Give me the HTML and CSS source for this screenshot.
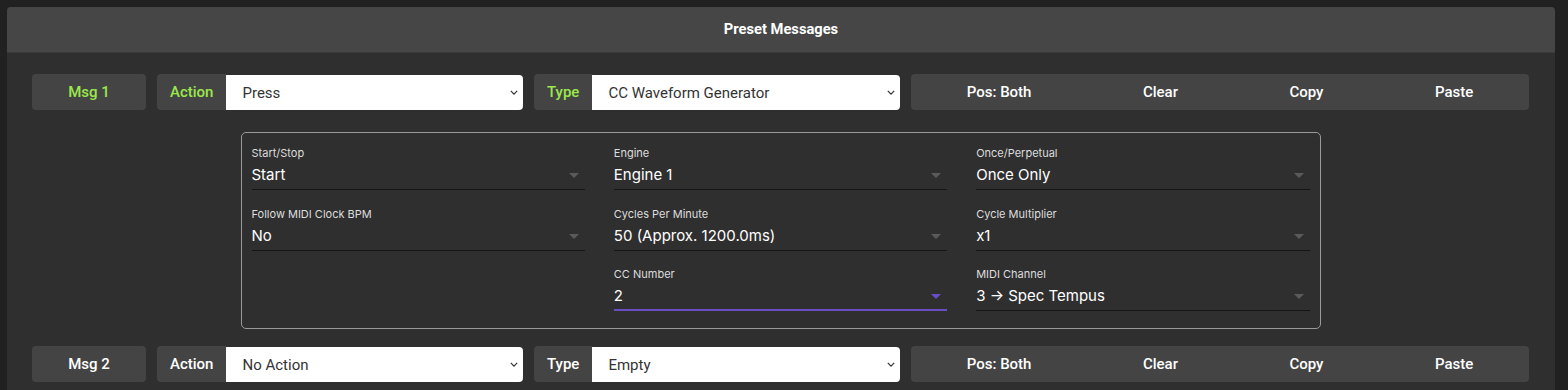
FILE: index.html
```html
<!DOCTYPE html>
<html lang="en">
<head>
    <meta charset="UTF-8">
    <meta name="viewport" content="width=device-width, initial-scale=1.0">
    <title>Preset Messages</title>
    <link rel="stylesheet" href="styles.css">
</head>
<body>

<div class="panel">
    <div class="panel-header">Preset Messages</div>
    <div class="panel-body">

        <div class="msg-row active">
            <div class="msg-name">Msg 1</div>
            <div class="group">
                <span class="group-label">Action</span>
                <div class="select-wrap">
                    <select><option>Press</option></select>
                    <svg class="chevron" viewBox="0 0 10 6"><path d="M1 1l4 4 4-4" fill="none" stroke="#333" stroke-width="1.5"/></svg>
                </div>
            </div>
            <div class="group">
                <span class="group-label">Type</span>
                <div class="select-wrap">
                    <select><option>CC Waveform Generator</option></select>
                    <svg class="chevron" viewBox="0 0 10 6"><path d="M1 1l4 4 4-4" fill="none" stroke="#333" stroke-width="1.5"/></svg>
                </div>
            </div>
            <div class="btn-group">
                <button>Pos: Both</button>
                <button>Clear</button>
                <button>Copy</button>
                <button>Paste</button>
            </div>
        </div>

        <div class="msg-detail">
            <div class="field">
                <label>Start/Stop</label>
                <div class="field-value">Start</div>
            </div>
            <div class="field">
                <label>Engine</label>
                <div class="field-value">Engine 1</div>
            </div>
            <div class="field">
                <label>Once/Perpetual</label>
                <div class="field-value">Once Only</div>
            </div>
            <div class="field">
                <label>Follow MIDI Clock BPM</label>
                <div class="field-value">No</div>
            </div>
            <div class="field">
                <label>Cycles Per Minute</label>
                <div class="field-value">50 (Approx. 1200.0ms)</div>
            </div>
            <div class="field">
                <label>Cycle Multiplier</label>
                <div class="field-value">x1</div>
            </div>
            <div></div>
            <div class="field focused">
                <label>CC Number</label>
                <div class="field-value">2</div>
            </div>
            <div class="field">
                <label>MIDI Channel</label>
                <div class="field-value">3 → Spec Tempus</div>
            </div>
        </div>

        <div class="msg-row">
            <div class="msg-name">Msg 2</div>
            <div class="group">
                <span class="group-label">Action</span>
                <div class="select-wrap">
                    <select><option>No Action</option></select>
                    <svg class="chevron" viewBox="0 0 10 6"><path d="M1 1l4 4 4-4" fill="none" stroke="#333" stroke-width="1.5"/></svg>
                </div>
            </div>
            <div class="group">
                <span class="group-label">Type</span>
                <div class="select-wrap">
                    <select><option>Empty</option></select>
                    <svg class="chevron" viewBox="0 0 10 6"><path d="M1 1l4 4 4-4" fill="none" stroke="#333" stroke-width="1.5"/></svg>
                </div>
            </div>
            <div class="btn-group">
                <button>Pos: Both</button>
                <button>Clear</button>
                <button>Copy</button>
                <button>Paste</button>
            </div>
        </div>

    </div>
</div>

</body>
</html>
```

FILE: styles.css
```css
body {
    margin: 0;
    padding: 7px;
    background-color: #212121;
    font-family: Roboto, "Liberation Sans", sans-serif;
    color: #fff;
}
.panel {
    width: 1548px;
    background: #2f2f2f;
    border-radius: 4px 4px 0 0;
}
.panel-header {
    height: 45px;
    line-height: 45px;
    background: #464646;
    border-bottom: 1px solid #3a3a3a;
    border-radius: 4px 4px 0 0;
    text-align: center;
    font-size: 14.7px;
    font-weight: 700;
}
.panel-body {
    padding: 21px 26px 10px 25px;
}
.msg-row {
    display: grid;
    grid-template-columns: 114px 366px 366px 1fr;
    gap: 11px;
    height: 36px;
    font-size: 15px;
}
.msg-name {
    background: #444;
    border-radius: 4px;
    display: flex;
    align-items: center;
    justify-content: center;
    font-weight: 500;
}
.group {
    display: flex;
}
.group-label {
    background: #444;
    border-radius: 4px 0 0 4px;
    display: flex;
    align-items: center;
    justify-content: center;
    font-weight: 500;
    padding: 0 13px;
}
.active .msg-name, .active .group-label {
    color: #9be84b;
}
.select-wrap {
    position: relative;
    flex: 1;
    margin-top: 1px;
}
.select-wrap select {
    appearance: none;
    width: 100%;
    height: 35px;
    border: none;
    border-radius: 0 4px 4px 0;
    background: #fff;
    color: #333;
    font-family: Roboto, "Liberation Sans", sans-serif;
    font-size: 15px;
    padding: 0 30px 0 16px;
    outline: none;
}
.chevron {
    position: absolute;
    right: 5px;
    top: 15px;
    width: 8px;
    height: 5px;
    pointer-events: none;
}
.btn-group {
    display: flex;
    background: #444;
    border-radius: 4px;
}
.btn-group button {
    flex: 1 1 auto;
    background: transparent;
    border: none;
    color: #fff;
    font-family: Roboto, "Liberation Sans", sans-serif;
    font-size: 15px;
    font-weight: 500;
    padding: 0;
    cursor: pointer;
}
.msg-detail {
    width: 1058px;
    margin: 22px auto 17px;
    border: 1px solid #9a9a9a;
    border-radius: 5px;
    padding: 13px 10px 17px;
    display: grid;
    grid-template-columns: repeat(3, 1fr);
    column-gap: 29px;
    row-gap: 16.5px;
    font-family: Inter, "Liberation Sans", sans-serif;
}
.field label {
    display: block;
    font-size: 11px;
    line-height: 14px;
    color: #ddd;
    margin-bottom: 4px;
}
.field-value {
    position: relative;
    font-size: 15px;
    line-height: 22px;
    padding-bottom: 3px;
    border-bottom: 1px solid #151515;
}
.field-value::after {
    content: "";
    position: absolute;
    right: 6px;
    top: 9px;
    border-left: 5px solid transparent;
    border-right: 5px solid transparent;
    border-top: 5px solid #5a5a5a;
}
.focused .field-value {
    border-bottom: 2px solid #6a4fc4;
    padding-bottom: 2px;
}
.focused .field-value::after {
    border-top-color: #6a4fc4;
}
```
